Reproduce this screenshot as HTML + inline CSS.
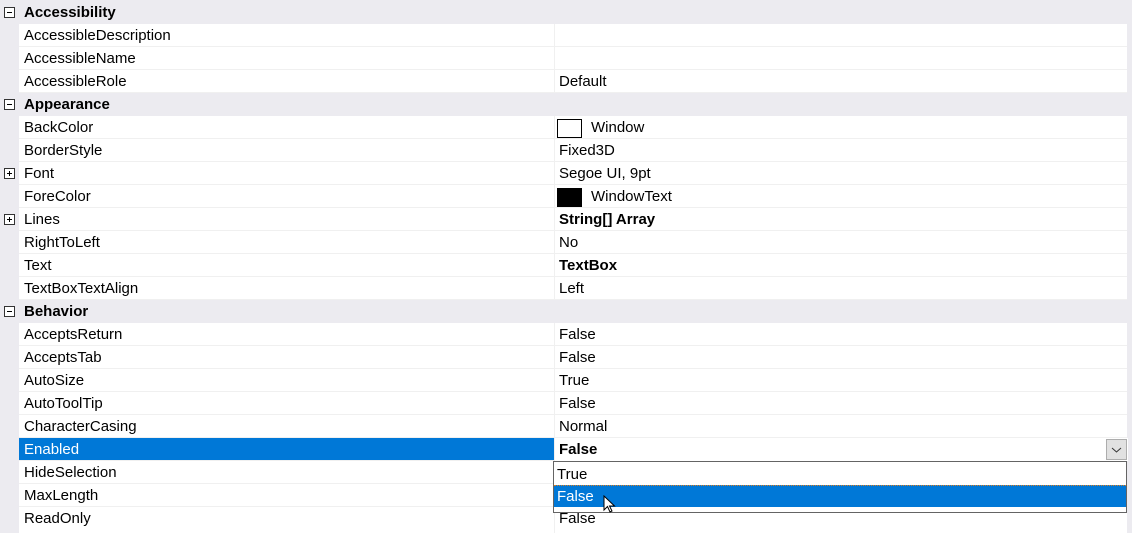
<!DOCTYPE html><html style="overflow:hidden;height:533px"><head><style>
body{margin:0;width:1132px;height:533px;overflow:hidden;background:#ecebf0;font-family:"Liberation Sans",sans-serif;font-size:15px;color:#000;position:relative}
.r{position:absolute;left:19px;width:1108px;height:22px;background:#fff;border-bottom:1px solid #f0f0f0}
.r .n{position:absolute;left:5px;top:3px;white-space:nowrap}
.r .v{position:absolute;left:535px;top:0;height:23px;border-left:1px solid #f0f0f0;width:573px}
.r .v span{position:absolute;left:4px;top:3px;white-space:nowrap}
.h{position:absolute;left:0;width:1127px;height:23px;background:#ecebf0}
.h b{position:absolute;left:24px;top:3px}
.pm{position:absolute;left:4px;width:11px;height:11px;border:1px solid #333;background:#fff;box-sizing:border-box}
.pm:before{content:"";position:absolute;left:2px;top:4px;width:5px;height:1px;background:#000}
.pm.p:after{content:"";position:absolute;left:4px;top:2px;width:1px;height:5px;background:#000}
.sel{background:#0078d7}.sel .n{color:#fff}
.sw{position:absolute;left:2px;top:3px;width:23px;height:17px;border:1px solid #000}
</style></head><body>
<div class="h" style="top:1px"><div class="pm" style="top:6px"></div><b>Accessibility</b></div>
<div class="r" style="top:24px"><span class="n">AccessibleDescription</span><div class="v"></div></div>
<div class="r" style="top:47px"><span class="n">AccessibleName</span><div class="v"></div></div>
<div class="r" style="top:70px"><span class="n">AccessibleRole</span><div class="v"><span>Default</span></div></div>
<div class="h" style="top:93px"><div class="pm" style="top:6px"></div><b>Appearance</b></div>
<div class="r" style="top:116px"><span class="n">BackColor</span><div class="v"><div class="sw" style="background:#fff"></div><span style="left:36px">Window</span></div></div>
<div class="r" style="top:139px"><span class="n">BorderStyle</span><div class="v"><span>Fixed3D</span></div></div>
<div class="r" style="top:162px"><div class="pm p" style="left:-15px;top:6px"></div><span class="n">Font</span><div class="v"><span>Segoe UI, 9pt</span></div></div>
<div class="r" style="top:185px"><span class="n">ForeColor</span><div class="v"><div class="sw" style="background:#000"></div><span style="left:36px">WindowText</span></div></div>
<div class="r" style="top:208px"><div class="pm p" style="left:-15px;top:6px"></div><span class="n">Lines</span><div class="v"><span><b>String[] Array</b></span></div></div>
<div class="r" style="top:231px"><span class="n">RightToLeft</span><div class="v"><span>No</span></div></div>
<div class="r" style="top:254px"><span class="n">Text</span><div class="v"><span><b>TextBox</b></span></div></div>
<div class="r" style="top:277px"><span class="n">TextBoxTextAlign</span><div class="v"><span>Left</span></div></div>
<div class="h" style="top:300px"><div class="pm" style="top:6px"></div><b>Behavior</b></div>
<div class="r" style="top:323px"><span class="n">AcceptsReturn</span><div class="v"><span>False</span></div></div>
<div class="r" style="top:346px"><span class="n">AcceptsTab</span><div class="v"><span>False</span></div></div>
<div class="r" style="top:369px"><span class="n">AutoSize</span><div class="v"><span>True</span></div></div>
<div class="r" style="top:392px"><span class="n">AutoToolTip</span><div class="v"><span>False</span></div></div>
<div class="r" style="top:415px"><span class="n">CharacterCasing</span><div class="v"><span>Normal</span></div></div>
<div class="r sel" style="top:438px"><span class="n">Enabled</span><div class="v" style="background:#fff"><span><b>False</b></span>
<div style="position:absolute;right:1px;top:1px;width:19px;height:19px;background:#e1e1e1;border:1px solid #adadad"><svg width="19" height="19" style="position:absolute;left:0;top:0"><path d="M5 8l4.5 4 4.5-4" fill="none" stroke="#333" stroke-width="1"/></svg></div></div></div>
<div class="r" style="top:461px"><span class="n">HideSelection</span><div class="v"></div></div>
<div class="r" style="top:484px"><span class="n">MaxLength</span><div class="v"></div></div>
<div class="r" style="top:507px;height:26px;border:0"><span class="n">ReadOnly</span><div class="v" style="height:26px"><span>False</span></div></div>
<div style="position:absolute;left:553px;top:461px;width:572px;height:50px;border:1px solid #646464;background:#fff">
<span style="position:absolute;left:3px;top:4px">True</span>
<div style="position:absolute;left:0;top:23px;width:572px;height:21px;background:#0078d7;border-top:1px dotted #e08020"></div>
<span style="position:absolute;left:3px;top:26px;color:#fff">False</span>
<svg width="14" height="20" style="position:absolute;left:49px;top:33px"><path d="M1 1v14l3.5-3.5 2.5 5.5 2-1-2.5-5h5z" fill="#fff" stroke="#000" stroke-width="1"/></svg>
</div>
</body></html>
